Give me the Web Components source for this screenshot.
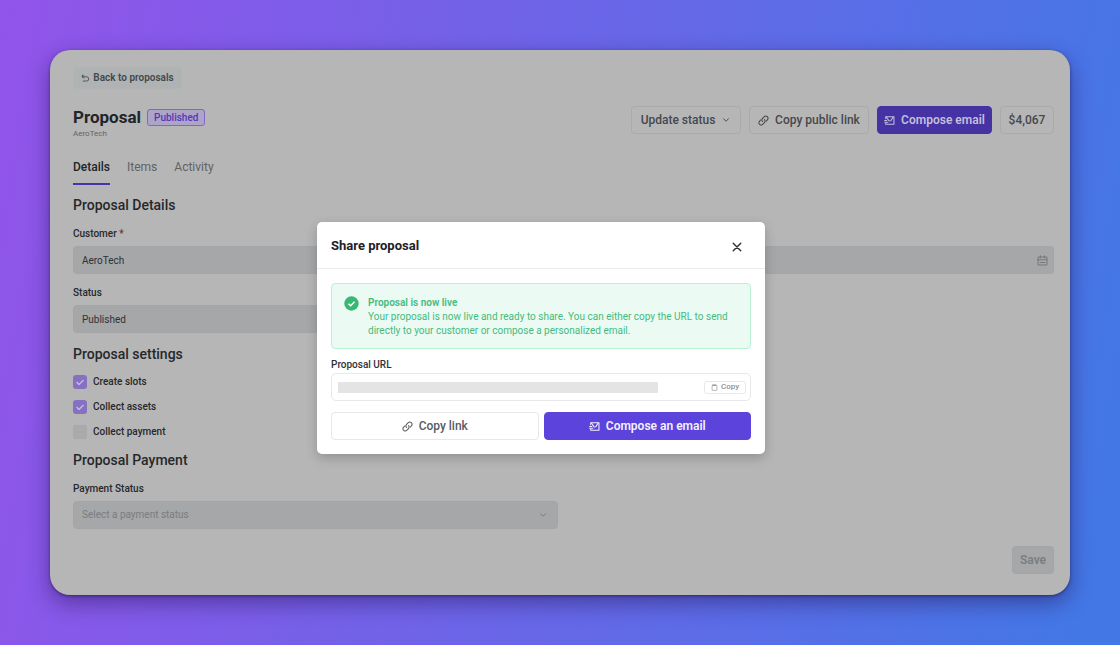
<!DOCTYPE html>
<html lang="en">
<head>
<meta charset="utf-8">
<title>Share proposal</title>
<style>
  html { min-height: 100%; display: flex; background: linear-gradient(100deg, #9254ea 0%, #4477e6 96%); }
  body { margin: 0; flex: 1; display: flex; font-family: Roboto, "Liberation Sans", sans-serif; font-size: 10px; line-height: 14px; color: #26282b; }
</style>
</head>
<body>
<proposal-page></proposal-page>

<script>
const define = (name, html, setup) => {
  const template = document.createElement('template');
  template.innerHTML = html;
  customElements.define(name, class extends HTMLElement {
    constructor() {
      super();
      this.attachShadow({ mode: 'open' }).append(template.content.cloneNode(true));
    }
    connectedCallback() { if (setup) setup(this, this.shadowRoot); }
  });
};

const icons = {
  back: '<path d="M5 2.5 2.5 5 5 7.5"/><path d="M2.5 5H10a3.6 3.6 0 0 1 0 7.5H4"/><path d="M2.5 2v3"/>',
  down: '<path d="m4 6 4 4 4-4"/>',
  link: '<path d="M6.7 9.4A3.2 3.2 0 0 1 6.6 5l2.2-2.4a3.3 3.3 0 0 1 4.8 4.6l-1.4 1.6"/><path d="M9.3 6.6a3.2 3.2 0 0 1 .1 4.4l-2.2 2.4a3.3 3.3 0 0 1-4.8-4.6l1.400-1.600"/>',
  mail: '<path d="M2.500 5.500V2.500h12v11h-12V12"/><path d="m3.500 3 3 4.500a2.300 2.300 0 0 0 4 0l3-4.500"/><path d="M1 8h3M1 10.500h4.500"/>',
  calendar: '<rect x="1.500" y="3" width="13" height="11.500" rx="1"/><path d="M1.500 7h13M5 1v3M11 1v3M4.500 11h7"/>',
  close: '<path d="m3 3 10 10M13 3 3 13" stroke-width="1.900"/>',
  clip: '<rect x="2.500" y="3" width="11" height="11.500" rx="1"/><path d="M5 2.500h6" stroke-width="2.500"/>'
};

define('ui-icon', `
<style>
  :host { display: block; flex: none; width: 11px; height: 11px; }
  svg { display: block; width: 100%; height: 100%; fill: none; stroke: currentColor; stroke-width: 1.5; stroke-linecap: round; stroke-linejoin: round; }
</style>
<svg viewBox="0 0 16 16" aria-hidden="true"></svg>`,
(host, root) => { root.querySelector('svg').innerHTML = icons[host.getAttribute('name')]; });

define('ui-button', `
<style>
  :host { display: block; }
  button { display: flex; align-items: center; justify-content: center; gap: var(--gap, 6px); box-sizing: border-box; width: 100%; height: var(--height, 28px); margin: 0; padding: 0 8px; border: 1px solid var(--line, #a9abab); border-radius: 4px; background: var(--fill, transparent); color: var(--ink, #45484c); font: 500 12px/14px Roboto, "Liberation Sans", sans-serif; white-space: nowrap; }
  :host([size=small]) button { font-size: 10px; font-weight: 600; }
  :host([size=tiny]) button { font-size: 8px; line-height: 10px; border-radius: 3px; padding: 0 4px; }
  :host([kind=primary]) button { font-weight: 600; }
</style>
<button type="button"><slot></slot></button>`,
(host, root) => { root.querySelector('button').disabled = host.hasAttribute('disabled'); });

define('ui-badge', `
<style>
  :host { display: block; box-sizing: border-box; padding: 0 6px; border: 1px solid #8069c4; border-radius: 3px; background: #aea3c9; color: #5439b2; font-weight: 500; line-height: 15px; }
</style><slot></slot>`);

define('ui-tabs', `
<style>
  :host { display: block; }
  nav { display: flex; gap: 17px; }
  ::slotted(a) { padding-bottom: 9px; border-bottom: 2px solid transparent; color: #606265; font-size: 12px; font-weight: 400; text-decoration: none; }
  ::slotted(a[aria-current]) { color: #222427; border-color: #4434a6; font-weight: 500; }
</style><nav><slot></slot></nav>`);

const fieldStyle = `
<style>
  :host { display: flex; flex-direction: column; justify-content: flex-end; gap: 4px; min-width: 0; }
  label { font-weight: 500; line-height: 16px; }
  label:empty { display: none; }
  i { color: #703238; font-style: normal; }
  div { display: grid; grid-template-columns: 1fr auto; align-items: center; color: #77797c; }
  input, select { grid-area: 1 / 1 / 2 / 3; appearance: none; box-sizing: border-box; width: 100%; min-width: 0; height: 28px; margin: 0; padding: 0 8px; border: 1px solid #a3a5a7; border-radius: 4px; background: #a5a7a9; color: #303235; font: 400 10px/14px Roboto, "Liberation Sans", sans-serif; opacity: 1; }
  select { color: #7a7c7f; }
  ui-icon { grid-area: 1 / 2; margin-right: 6px; }
  ui-icon[name=down] { margin-right: 10px; width: 10px; height: 10px; }
</style>`;

define('text-field', fieldStyle + `<label for="control"></label><div><input id="control" readonly></div>`,
(host, root) => {
  const label = root.querySelector('label'), input = root.querySelector('input');
  label.textContent = host.getAttribute('label') || '';
  if (host.hasAttribute('required')) label.insertAdjacentHTML('beforeend', ' <i>*</i>');
  input.value = host.getAttribute('value') || '';
  if (host.hasAttribute('icon')) {
    input.setAttribute('aria-label', 'Date');
    const icon = document.createElement('ui-icon');
    icon.setAttribute('name', host.getAttribute('icon'));
    input.after(icon);
  }
});

define('select-field', fieldStyle + `
<label for="control"></label><div><select id="control"><option></option></select><ui-icon name="down"></ui-icon></div>`,
(host, root) => {
  root.querySelector('label').textContent = host.getAttribute('label');
  root.querySelector('option').textContent = host.getAttribute('placeholder');
});

define('check-field', `
<style>
  :host { display: block; }
  label { display: flex; align-items: center; gap: 6px; font-weight: 500; }
  span { display: grid; color: #c4bcdd; }
  input { grid-area: 1 / 1; appearance: none; width: 14px; height: 14px; margin: 0; border-radius: 3px; background: #a8aaac; }
  input:checked { background: #8570c2; }
  svg { grid-area: 1 / 1; width: 14px; height: 14px; fill: none; stroke: currentColor; stroke-width: 1.4; visibility: hidden; pointer-events: none; }
  input:checked + svg { visibility: visible; }
</style>
<label><span><input type="checkbox"><svg viewBox="0 0 14 14" aria-hidden="true"><path d="m3.500 7 2.500 2.500 4.500-4.500"/></svg></span><slot></slot></label>`,
(host, root) => { root.querySelector('input').checked = host.hasAttribute('checked'); });

define('success-note', `
<style>
  :host { display: flex; align-items: flex-start; gap: 9px; padding: 12px 12px 10px; border: 1px solid #b9f2d3; border-radius: 4px; background: #ebfbf3; color: #45ba7d; }
  svg { flex: none; width: 15px; height: 15px; }
  strong { display: block; font-weight: 600; }
</style>
<svg viewBox="0 0 15 15" aria-hidden="true"><circle cx="7.500" cy="7.500" r="7.200" fill="#39b873"/><path d="m4.500 7.700 2.100 2.100 3.900-4" fill="none" stroke="#fff" stroke-width="1.500"/></svg>
<div><strong><slot name="title"></slot></strong><slot></slot></div>`);

define('share-dialog', `
<style>
  :host { display: block; border-radius: 5px; background: #fff; box-shadow: 0 4px 12px rgba(0,0,0,.2); --line: #e8e8ea; --ink: #595b60; }
  header { display: flex; align-items: center; justify-content: space-between; box-sizing: border-box; height: 47px; padding: 2px 14px 0; border-bottom: 1px solid #ececee; }
  h2 { margin: 0; font-size: 13px; line-height: 18px; font-weight: 700; color: #1f2124; }
  header button { display: grid; place-items: center; width: 28px; height: 28px; margin: 0; padding: 2px 0 0; border: 0; background: none; color: #333; }
  header ui-icon { width: 12px; height: 12px; }
  section { display: flex; flex-direction: column; padding: 14px; }
  label { margin-top: 8px; font-weight: 500; line-height: 16px; color: #303236; }
  .url { display: flex; align-items: center; justify-content: space-between; height: 26px; padding: 0 4px 0 6px; border: 1px solid #e8e8ea; border-radius: 5px; }
  .url input { flex: 0 1 320px; box-sizing: border-box; min-width: 0; height: 11px; margin: 0; padding: 0; border: 0; background: #e4e4e4; font: inherit; }
  .url ui-button { flex: none; width: 42px; --height: 13px; --gap: 3px; --ink: #8e9095; }
  .url ui-icon { width: 7px; height: 7px; }
  .actions { display: grid; grid-template-columns: 1fr 1fr; gap: 5px; margin-top: 11px; }
  ui-button[kind=primary] { --fill: #5b43dc; --line: #5b43dc; --ink: #f3f1ff; }
</style>
<header><h2>Share proposal</h2><button type="button" aria-label="Close"><ui-icon name="close"></ui-icon></button></header>
<section>
  <success-note><span slot="title">Proposal is now live</span>Your proposal is now live and ready to share. You can either copy the URL to send directly to your customer or compose a personalized email.</success-note>
  <label for="url">Proposal URL</label>
  <div class="url"><input id="url" readonly><ui-button size="tiny"><ui-icon name="clip"></ui-icon>Copy</ui-button></div>
  <div class="actions">
    <ui-button><ui-icon name="link"></ui-icon>Copy link</ui-button>
    <ui-button kind="primary"><ui-icon name="mail"></ui-icon>Compose an email</ui-button>
  </div>
</section>`);

define('proposal-page', `
<style>
  :host { flex: 1; display: flex; padding: 50px; min-width: 0; }
  main { position: relative; flex: 1; min-width: 0; display: flex; flex-direction: column; box-sizing: border-box; padding: 17px 16px 21px 23px; border-radius: 20px; background: #b6b6b6; box-shadow: 0 8px 22px rgba(30,10,70,.45), 0 1px 3px rgba(20,10,60,.5); }
  .back { align-self: flex-start; width: 109px; --line: #b1b4b4; --fill: #b0b3b3; --height: 22px; --gap: 3px; }
  .back ui-icon { width: 9px; height: 9px; }
  header { display: flex; justify-content: space-between; align-items: flex-start; margin-top: 17px; }
  .title { display: flex; align-items: center; gap: 6px; height: 22px; }
  h1 { margin: 0; font-size: 17px; line-height: 22px; font-weight: 700; color: #222427; }
  header p { margin: 0; font-size: 8px; line-height: 12px; color: #626467; }
  .actions { display: flex; gap: 8px; }
  .status { width: 110px; } .link { width: 120px; } .compose { width: 115px; } .total { width: 54px; }
  .status ui-icon { width: 10px; height: 10px; }
  .compose { --fill: #4532a3; --line: #4532a3; --ink: #c4bfdf; }
  ui-tabs { margin: 20px 0 10px; }
  form { display: flex; flex-direction: column; gap: 11px; }
  h2 { margin: 0; font-size: 14px; line-height: 20px; font-weight: 500; color: #26282b; }
  .row { display: grid; grid-template-columns: 1fr 1fr; gap: 11px; }
  .save { align-self: flex-end; width: 42px; margin-top: 17px; --fill: #a5a7a9; --line: #a3a5a7; --ink: #7b7d80; }
  share-dialog { position: absolute; top: 172px; left: calc(50% - 243px); width: 448px; }
</style>
<main>
  <ui-button class="back" size="small"><ui-icon name="back"></ui-icon>Back to proposals</ui-button>
  <header>
    <div><div class="title"><h1>Proposal</h1><ui-badge>Published</ui-badge></div><p>AeroTech</p></div>
    <div class="actions">
      <ui-button class="status">Update status<ui-icon name="down"></ui-icon></ui-button>
      <ui-button class="link"><ui-icon name="link"></ui-icon>Copy public link</ui-button>
      <ui-button class="compose" kind="primary"><ui-icon name="mail"></ui-icon>Compose email</ui-button>
      <ui-button class="total">$4,067</ui-button>
    </div>
  </header>
  <ui-tabs><a href="#details" aria-current="page">Details</a><a href="#items">Items</a><a href="#activity">Activity</a></ui-tabs>
  <form>
    <h2>Proposal Details</h2>
    <div class="row"><text-field label="Customer" required value="AeroTech"></text-field><text-field icon="calendar"></text-field></div>
    <div class="row"><text-field label="Status" value="Published"></text-field></div>
    <h2>Proposal settings</h2>
    <check-field checked>Create slots</check-field>
    <check-field checked>Collect assets</check-field>
    <check-field>Collect payment</check-field>
    <h2>Proposal Payment</h2>
    <div class="row"><select-field label="Payment Status" placeholder="Select a payment status"></select-field></div>
  </form>
  <ui-button class="save" kind="primary" disabled>Save</ui-button>
  <share-dialog role="dialog" aria-label="Share proposal"></share-dialog>
</main>`);
</script>
</body>
</html>
